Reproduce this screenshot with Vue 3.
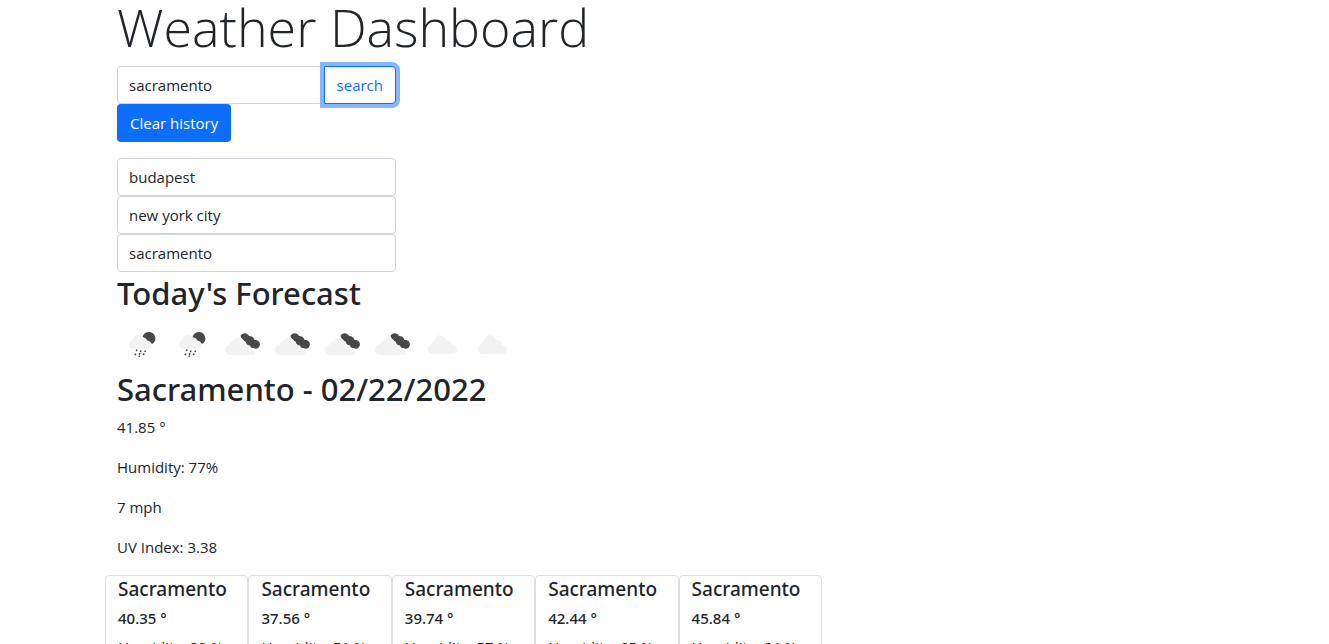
<script setup>
import { ref } from 'vue'

const query = ref('sacramento')
const history = ref(['budapest', 'new york city', 'sacramento'])
const hourly = ['rain', 'rain', 'broken', 'broken', 'broken', 'broken', 'cloud', 'cloud']
const days = [
  { temp: '40.35', humidity: 80 },
  { temp: '37.56', humidity: 51 },
  { temp: '39.74', humidity: 57 },
  { temp: '42.44', humidity: 65 },
  { temp: '45.84', humidity: 64 },
]
</script>

<template>
  <main class="container">
    <h1>Weather Dashboard</h1>
    <div class="sidebar">
      <form class="search" @submit.prevent>
        <input v-model="query" type="text" aria-label="City" class="field" />
        <button type="submit" class="search-btn">search</button>
      </form>
      <button type="button" class="clear-btn">Clear history</button>
      <div class="history">
        <input v-for="(city, i) in history" :key="i" type="text" readonly class="field" :value="city" :aria-label="'Recent city ' + (i + 1)" />
      </div>
    </div>

    <h2>Today's Forecast</h2>
    <div class="hours">
      <svg v-for="(kind, i) in hourly" :key="i" viewBox="0 0 50 50" width="50" height="50" aria-hidden="true">
        <g v-if="kind === 'rain'">
          <path d="M25.500 18C26.500 14.500 29 13 32 13A6.500 6.500 0 0 1 36.500 24Q35.500 25.300 34.500 24.500Q33.500 22 30.500 21.500Q29 18.500 25.500 18z" fill="#48484a" />
          <path d="M16.500 30a4.700 4.700 0 0 1-.5-9.300a5.200 5.200 0 0 1 9.800-2a4.500 4.500 0 0 1 4.200 4.300a3.800 3.800 0 0 1 2.500 7z" fill="#f2f2f2" />
          <path d="M20 30.500l-.7 1.600M24 31.500l-.7 1.600M28.500 31.500l-.6 1.500M18.700 34.500l-.7 1.600M23 34l-.8 1.800M27 34.500l-.7 1.600M22.500 36.500l-.5 1.200" stroke="#48484a" stroke-width="1.600" />
        </g>
        <g v-else-if="kind === 'broken'">
          <path d="M23.500 17C25 13.500 30 13 32 17Q36.500 17 37.500 21C41 20.500 43 23 43 25.500C42.500 29.500 39 30.500 36.500 29Q33.500 29.500 33 26.500Q29.500 26.500 28.500 22.500Q25.500 22 23.500 17z" fill="#48484a" />
          <path d="M13.500 36a5.200 5.200 0 0 1-.5-10.500a4 4 0 0 1 4-3.500c.5-3.500 7.500-5.500 10.500.5c.5 1 .5 2 .5 3c3 0 5 2 5.500 4.500c3 0 4.500 2 4.500 3.500q0 2.500-3 2.500z" fill="#f2f2f2" />
        </g>
        <path v-else d="M15 35a5 5 0 0 1-.5-9.800Q15 22 17.500 22C18 14.500 27.500 14.500 29 21.500Q34 20.500 35 26C41.500 26 41.500 35 36 35z" fill="#f2f2f2" />
      </svg>
    </div>

    <h2>Sacramento - 02/22/2022</h2>
    <p>41.85 °</p>
    <p>Humidity: 77%</p>
    <p>7 mph</p>
    <p>UV Index: 3.38</p>

    <section class="days">
      <article v-for="day in days" :key="day.temp" class="card">
        <h5>Sacramento</h5>
        <h6>{{ day.temp }} °</h6>
        <p>Humidity: {{ day.humidity }} %</p>
      </article>
    </section>
  </main>
</template>

<style>
html,
body {
  background: #fff;
}
body {
  margin: 0;
}
</style>

<style scoped>
* {
  box-sizing: border-box;
}
.container {
  max-width: 1140px;
  margin-left: 105px;
  padding: 0 12px;
  color: #212529;
  font: 400 15px/24px "Segoe UI", "Open Sans", "Noto Sans", sans-serif;
}
h1, h2, h5, h6, p {
  margin: 0;
}
h1 {
  margin-bottom: 12px;
  font-size: 52px;
  font-weight: 300;
  line-height: 54px;
}
h2 {
  margin-bottom: 7px;
  font-family: "Segoe UI", "Noto Sans", "Open Sans", sans-serif;
  font-size: 31px;
  font-weight: 500;
  line-height: 38px;
}
p {
  margin-bottom: 16px;
}
.sidebar {
  max-width: 279px;
}
.search {
  display: flex;
}
.field {
  display: block;
  width: 100%;
  min-width: 0;
  height: 38px;
  padding: 6px 11px;
  border: 1px solid #ced4da;
  border-radius: 4px;
  background: #fff;
  color: #212529;
  font: inherit;
  outline: 0;
}
.search-btn {
  flex: none;
  margin-left: -1px;
  padding: 6px 12px;
  border: 1px solid #0d6efd;
  border-radius: 0 4px 4px 0;
  background: #fff;
  color: #0d6efd;
  font: inherit;
  box-shadow: 0 0 0 4px #86b7fe;
}
.clear-btn {
  display: block;
  height: 38px;
  padding: 6px 13px;
  border: 0;
  border-radius: 4px;
  background: #0d6efd;
  color: #fff;
  font: inherit;
}
.history {
  margin: 16px 0 2px;
}
.hours {
  display: flex;
  margin-bottom: 1px;
}
.days {
  display: grid;
  grid-template-columns: repeat(5, 1fr);
  max-width: 717px;
  margin: 0 -12px;
}
.card {
  padding: 1px 12px 0;
  border: 1px solid #dfdfdf;
  border-radius: 4px;
}
h5, h6 {
  margin-bottom: 5px;
  font-family: "Segoe UI", "Noto Sans", "Open Sans", sans-serif;
  font-weight: 500;
  line-height: 24px;
}
h5 {
  font-size: 19px;
}
h6 {
  font-size: 15px;
}
</style>
